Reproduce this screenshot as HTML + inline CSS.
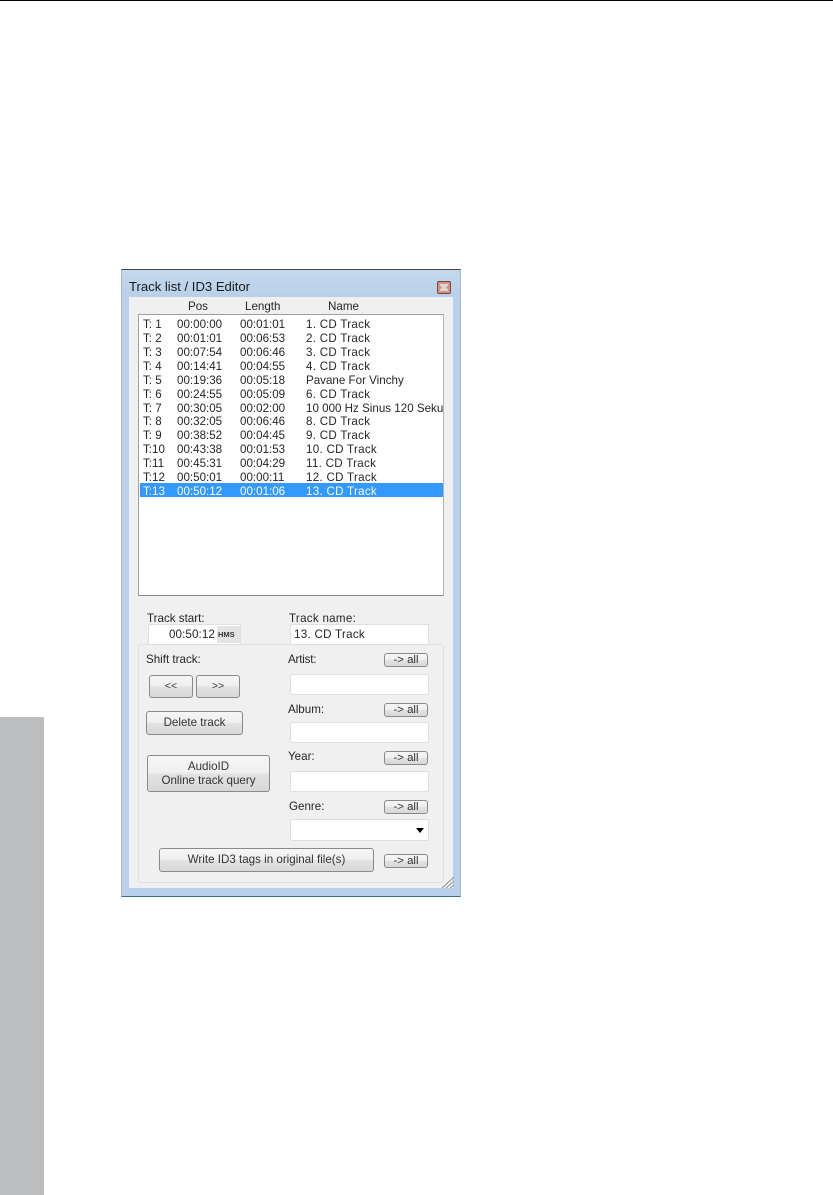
<!DOCTYPE html>
<html><head><meta charset="utf-8">
<style>
html,body{margin:0;padding:0;background:#fff}
body{width:833px;height:1195px;position:relative;overflow:hidden;font-family:"Liberation Sans",sans-serif;color:#262626}
div{position:absolute;box-sizing:border-box}
.t{font-size:11.6px;line-height:14px;height:14px;margin-top:1px;white-space:nowrap;filter:blur(.35px)}
.n{letter-spacing:.28px}
.b{border:1px solid #8a8a8a;border-radius:3px;background:linear-gradient(#f6f6f6 0,#efefef 48%,#e2e2e2 52%,#d8d8d8 100%);text-align:center;font-size:11.6px;white-space:nowrap;color:#333}
.a{left:384px;width:44px;height:14px;line-height:13px;font-size:11.4px}
.i{background:#fff;border:1px solid #dfe0e2;border-radius:2px;left:290px;width:139px;height:21px}
</style></head><body>
<div style="left:0;top:0;width:833px;height:1px;background:#000"></div>
<div style="left:0;top:717px;width:44px;height:478px;background:#bcbdbf"></div>

<div style="left:121px;top:269px;width:340px;height:628px;background:#b9d1ea;border:1px solid #a9bccb;border-top-color:#444;border-bottom-color:#3c6f86"></div>
<div style="left:122px;top:270px;width:338px;height:27px;background:linear-gradient(#c6d9ec,#b8d0e9)"></div>
<div class="t" style="left:129px;top:279px;font-size:13.1px;color:#1a1a1a">Track list / ID3 Editor</div>
<div style="left:437px;top:281px;width:14px;height:13px;background:#d8907f;border:1px solid #6d4a42;border-radius:2px"></div>
<div style="left:440px;top:284px;width:8px;height:7px;background:#d8d8d8;clip-path:polygon(0 0,100% 0,100% 25%,72% 50%,100% 75%,100% 100%,0 100%,0 75%,28% 50%,0 25%)"></div>

<div style="left:129px;top:297px;width:324px;height:591px;background:#f0f0f0"></div>
<div class="t" style="left:188px;top:299px">Pos</div>
<div class="t" style="left:245px;top:299px">Length</div>
<div class="t" style="left:328px;top:299px">Name</div>

<div style="left:138px;top:314px;width:306px;height:282px;background:#fff;border:1px solid #a0a0a0;border-right-color:#b5b5b5;border-bottom-color:#8a8a8a"></div>
<div style="left:140px;top:483px;width:303px;height:14px;background:#3399ff"></div>

<div class="t" style="left:143px;top:317px">T: 1</div><div class="t" style="left:177px;top:317px">00:00:00</div><div class="t" style="left:240px;top:317px">00:01:01</div><div class="t n" style="left:306px;top:317px">1. CD Track</div>
<div class="t" style="left:143px;top:331px">T: 2</div><div class="t" style="left:177px;top:331px">00:01:01</div><div class="t" style="left:240px;top:331px">00:06:53</div><div class="t n" style="left:306px;top:331px">2. CD Track</div>
<div class="t" style="left:143px;top:345px">T: 3</div><div class="t" style="left:177px;top:345px">00:07:54</div><div class="t" style="left:240px;top:345px">00:06:46</div><div class="t n" style="left:306px;top:345px">3. CD Track</div>
<div class="t" style="left:143px;top:359px">T: 4</div><div class="t" style="left:177px;top:359px">00:14:41</div><div class="t" style="left:240px;top:359px">00:04:55</div><div class="t n" style="left:306px;top:359px">4. CD Track</div>
<div class="t" style="left:143px;top:373px">T: 5</div><div class="t" style="left:177px;top:373px">00:19:36</div><div class="t" style="left:240px;top:373px">00:05:18</div><div class="t" style="left:306px;top:373px">Pavane For Vinchy</div>
<div class="t" style="left:143px;top:387px">T: 6</div><div class="t" style="left:177px;top:387px">00:24:55</div><div class="t" style="left:240px;top:387px">00:05:09</div><div class="t n" style="left:306px;top:387px">6. CD Track</div>
<div class="t" style="left:143px;top:401px">T: 7</div><div class="t" style="left:177px;top:401px">00:30:05</div><div class="t" style="left:240px;top:401px">00:02:00</div><div class="t" style="left:306px;top:401px;width:137px;overflow:hidden">10 000 Hz Sinus 120 Sekunden</div>
<div class="t" style="left:143px;top:414px">T: 8</div><div class="t" style="left:177px;top:414px">00:32:05</div><div class="t" style="left:240px;top:414px">00:06:46</div><div class="t n" style="left:306px;top:414px">8. CD Track</div>
<div class="t" style="left:143px;top:428px">T: 9</div><div class="t" style="left:177px;top:428px">00:38:52</div><div class="t" style="left:240px;top:428px">00:04:45</div><div class="t n" style="left:306px;top:428px">9. CD Track</div>
<div class="t" style="left:143px;top:442px">T:10</div><div class="t" style="left:177px;top:442px">00:43:38</div><div class="t" style="left:240px;top:442px">00:01:53</div><div class="t n" style="left:306px;top:442px">10. CD Track</div>
<div class="t" style="left:143px;top:456px">T:11</div><div class="t" style="left:177px;top:456px">00:45:31</div><div class="t" style="left:240px;top:456px">00:04:29</div><div class="t n" style="left:306px;top:456px">11. CD Track</div>
<div class="t" style="left:143px;top:470px">T:12</div><div class="t" style="left:177px;top:470px">00:50:01</div><div class="t" style="left:240px;top:470px">00:00:11</div><div class="t n" style="left:306px;top:470px">12. CD Track</div>
<div class="t" style="left:143px;top:484px;color:#fff">T:13</div><div class="t" style="left:177px;top:484px;color:#fff">00:50:12</div><div class="t" style="left:240px;top:484px;color:#fff">00:01:06</div><div class="t n" style="left:306px;top:484px;color:#fff">13. CD Track</div>

<div class="t" style="left:147px;top:611px">Track start:</div>
<div class="t n" style="left:289px;top:611px">Track name:</div>
<div style="left:148px;top:624px;width:93px;height:20px;background:#fff;border:1px solid #dfe0e2;border-bottom:0"></div>
<div class="t" style="left:169px;top:627px;letter-spacing:.1px">00:50:12</div>
<div style="left:217px;top:626px;width:23px;height:17px;background:#e4e4e4"></div>
<div style="left:218px;top:630px;font-size:7.5px;line-height:10px;font-weight:bold;color:#333;white-space:nowrap">HMS</div>
<div style="left:290px;top:624px;width:139px;height:20px;background:#fff;border:1px solid #dfe0e2;border-bottom:0"></div>
<div class="t n" style="left:294px;top:627px">13. CD Track</div>

<div style="left:138px;top:644px;width:306px;height:239px;border:1px solid #e0e0e0;border-radius:3px;background:#f0f0f0"></div>

<div class="t" style="left:146px;top:652px">Shift track:</div>
<div class="t" style="left:288px;top:652px;letter-spacing:-.2px">Artist:</div>
<div class="b a" style="top:653px">-&gt; all</div>
<div class="i" style="top:674px"></div>

<div class="b" style="left:149px;top:675px;width:44px;height:23px;line-height:20px;font-size:10.5px">&lt;&lt;</div>
<div class="b" style="left:196px;top:675px;width:44px;height:23px;line-height:20px;font-size:10.5px">&gt;&gt;</div>

<div class="t" style="left:288px;top:702px">Album:</div>
<div class="b a" style="top:703px">-&gt; all</div>
<div class="i" style="top:722px"></div>

<div class="b" style="left:146px;top:711px;width:97px;height:24px;line-height:21px">Delete track</div>

<div class="b" style="left:147px;top:755px;width:123px;height:37px;line-height:14px;padding-top:4px">AudioID<br>Online track query</div>

<div class="t" style="left:288px;top:749px">Year:</div>
<div class="b a" style="top:751px">-&gt; all</div>
<div class="i" style="top:771px"></div>

<div class="t" style="left:289px;top:799px">Genre:</div>
<div class="b a" style="top:800px">-&gt; all</div>
<div class="i" style="top:819px;height:22px"></div>
<div style="left:416px;top:828px;width:0;height:0;border-left:4.5px solid transparent;border-right:4.5px solid transparent;border-top:5px solid #000"></div>

<div class="b" style="left:159px;top:848px;width:215px;height:24px;line-height:21px">Write ID3 tags in original file(s)</div>
<div class="b a" style="top:854px">-&gt; all</div>

<svg style="position:absolute;left:440px;top:875px" width="16" height="14" viewBox="0 0 16 14"><path d="M2 13L14 2M6 13L14 6M10 13L14 10" stroke="#8e9092" stroke-width="1" fill="none"/></svg>
</body></html>
